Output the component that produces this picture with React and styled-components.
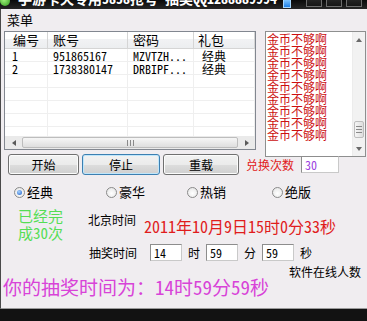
import React from "react";
import styled, { createGlobalStyle } from "styled-components";

const FONT = '"Noto Sans Mono CJK SC", "Noto Sans CJK SC", sans-serif';

const Global = createGlobalStyle`
  html, body { margin: 0; padding: 0; background: #111; }
  body { width: 367px; height: 321px; overflow: hidden; font-family: ${FONT}; }
  * { box-sizing: border-box; }
`;

const Window = styled.div`
  width: 367px;
  height: 321px;
  display: flex;
  flex-direction: column;
  background: #121212;
`;

const TitleBar = styled.div`
  height: 9px;
  flex: none;
  overflow: hidden;
  display: flex;
  align-items: flex-end;
  background: linear-gradient(#0a0a0a, #262626);
`;

const AppIcon = styled.span`
  width: 10px;
  height: 10px;
  flex: none;
  margin-bottom: 3px;
  border-radius: 50%;
  background: radial-gradient(circle at 40% 40%, #9ef07a, #2f9a1c);
`;

const TitleText = styled.span`
  flex: 1;
  margin-left: 8px;
  margin-bottom: 3px;
  color: #fff;
  font-size: 14px;
  font-weight: bold;
  line-height: 16px;
  white-space: nowrap;
`;

const TrayIcon = styled.span`
  width: 8px;
  height: 9px;
  flex: none;
  margin-bottom: 1px;
  margin-right: 15px;
  background: linear-gradient(#7cc4ff, #1e7fe6);
  border: 1px solid #a8d8ff;
`;

const Controls = styled.div`
  display: flex;
  gap: 4px;
  margin-right: 5px;
  margin-bottom: 2px;
`;

const CtrlBtn = styled.span`
  width: 16px;
  height: 12px;
  border: 1px solid #6c6c6c;
  background: linear-gradient(#2c2c2c, #161616);
`;

const Client = styled.div`
  height: 300px;
  flex: none;
  background: #f0edf0;
  border-left: 1px solid #4a4a4a;
  border-bottom: 1px solid #9a9a9a;
  display: flex;
  flex-direction: column;
  color: #000;
`;

const MenuBar = styled.div`
  height: 22px;
  flex: none;
  padding-left: 6px;
  font-size: 13px;
  line-height: 22px;
`;

const TopRow = styled.div`
  display: flex;
  align-items: flex-start;
  padding-left: 3px;
  gap: 9px;
`;

const ListView = styled.div`
  width: 252px;
  height: 119px;
  border: 1px solid #828790;
  background: #fff;
  display: flex;
  flex-direction: column;
`;

const COLS = "43px 80px 66px 1fr";

const HeaderRow = styled.div`
  display: grid;
  grid-template-columns: ${COLS};
  height: 17px;
  flex: none;
  background: linear-gradient(#ffffff 0%, #ffffff 45%, #f1f2f4 46%, #eceef0 100%);
  border-bottom: 1px solid #d5d5d5;
`;

const HeaderCell = styled.div`
  padding-left: ${(p) => p.$pad}px;
  border-right: 1px solid #d5d5d5;
  font-size: 13px;
  line-height: 16px;
  white-space: nowrap;
`;

const Rows = styled.div`
  flex: 1;
  overflow: hidden;
`;

const Row = styled.div`
  display: grid;
  grid-template-columns: ${COLS};
  height: 13px;
`;

const Cell = styled.div`
  height: 13px;
  padding-left: ${(p) => p.$pad}px;
  border-right: 1px solid #efefef;
  border-bottom: 1px solid #efefef;
  font-size: 12px;
  line-height: 13px;
  white-space: nowrap;
`;

const HScroll = styled.div`
  height: 13px;
  flex: none;
  display: flex;
  background: #eaeaea;
`;

const ArrowBox = styled.div`
  width: 17px;
  flex: none;
  display: flex;
  align-items: center;
  justify-content: center;
`;

const Tri = styled.span`
  width: 0;
  height: 0;
  border: 3px solid transparent;
  ${(p) =>
    p.$dir === "left"
      ? "border-right: 4px solid #5a5a5a; border-left-width: 0;"
      : p.$dir === "right"
      ? "border-left: 4px solid #5a5a5a; border-right-width: 0;"
      : p.$dir === "up"
      ? "border-bottom: 4px solid #6a6a6a; border-top-width: 0;"
      : "border-top: 4px solid #6a6a6a; border-bottom-width: 0;"}
`;

const HThumb = styled.div`
  flex: 1;
  margin: 1px 0;
  border: 1px solid #bdbdbd;
  border-radius: 2px;
  background: linear-gradient(#f6f6f6, #dedede);
  display: flex;
  align-items: center;
  justify-content: center;
  gap: 2px;
`;

const GripV = styled.span`
  width: 1px;
  height: 6px;
  background: #8a8a8a;
`;

const TextBox = styled.div`
  width: 101px;
  height: 126px;
  border: 1px solid #8e8f8f;
  background: #fff;
  display: flex;
`;

const Lines = styled.div`
  flex: 1;
  padding: 1px 0 0 1px;
  color: #cc1010;
  font-size: 12px;
  line-height: 12px;
`;

const VScroll = styled.div`
  width: 13px;
  flex: none;
  display: flex;
  flex-direction: column;
  background: #f2f2f2;
  border-left: 1px solid #ececec;
`;

const VArrow = styled.div`
  height: 15px;
  flex: none;
  display: flex;
  align-items: center;
  justify-content: center;
`;

const VTrack = styled.div`
  flex: 1;
  display: flex;
  flex-direction: column;
  justify-content: flex-end;
  padding-bottom: 3px;
`;

const VThumb = styled.div`
  height: 17px;
  margin: 0 1px;
  border: 1px solid #bdbdbd;
  border-radius: 2px;
  background: linear-gradient(90deg, #f6f6f6, #dedede);
  display: flex;
  flex-direction: column;
  align-items: center;
  justify-content: center;
  gap: 2px;
`;

const GripH = styled.span`
  width: 6px;
  height: 1px;
  background: #8a8a8a;
`;

const ButtonRow = styled.div`
  margin-top: -3px;
  height: 21px;
  padding-left: 7px;
  display: flex;
  align-items: center;
`;

const Button = styled.div`
  width: ${(p) => p.$w}px;
  height: 21px;
  margin-right: ${(p) => p.$mr}px;
  border: 1px solid ${(p) => (p.$focus ? "#3c7fb1" : "#707070")};
  border-radius: 3px;
  background: linear-gradient(#f2f2f2 0%, #ebebeb 50%, #dddddd 51%, #cfcfcf 100%);
  box-shadow: inset 0 0 0 1px ${(p) => (p.$focus ? "#bfe6fb" : "#fcfcfc")};
  font-size: 12px;
  line-height: 19px;
  text-align: center;
`;

const RedLabel = styled.span`
  color: #e02020;
  font-size: 12px;
  line-height: 14px;
  margin-right: 7px;
`;

const Field = styled.div`
  width: ${(p) => p.$w}px;
  height: 17px;
  flex: none;
  border: 1px solid #8d8d8d;
  border-right-color: #c9c9c9;
  border-bottom-color: #c9c9c9;
  background: #fff;
  padding-left: 3px;
  font-size: 12px;
  line-height: 15px;
  color: ${(p) => p.$color || "#000"};
`;

const RadioRow = styled.div`
  margin-top: 9px;
  height: 16px;
  padding-left: 13px;
  display: grid;
  grid-template-columns: 92px 81px 85px auto;
  align-items: center;
`;

const RadioItem = styled.label`
  display: flex;
  align-items: center;
  gap: 2px;
  font-size: 13px;
  line-height: 16px;
`;

const RadioDot = styled.span`
  width: 11px;
  height: 11px;
  flex: none;
  border-radius: 50%;
  border: 1px solid #8a8a8a;
  background: radial-gradient(circle at 50% 60%, #ffffff 0%, #e2e2e2 100%);
  display: flex;
  align-items: center;
  justify-content: center;
  &::after {
    content: "";
    width: 5px;
    height: 5px;
    border-radius: 50%;
    background: ${(p) =>
      p.$checked ? "radial-gradient(circle at 40% 35%, #a9d4ff, #1c5cc8)" : "transparent"};
  }
`;

const MidSection = styled.div`
  display: flex;
  padding-left: 17px;
`;

const GreenText = styled.div`
  width: 70px;
  flex: none;
  margin-top: 7px;
  color: #55dd55;
  font-size: 15px;
  line-height: 17px;
  white-space: nowrap;
`;

const RightCol = styled.div`
  display: flex;
  flex-direction: column;
`;

const ClockRow = styled.div`
  display: flex;
  align-items: flex-start;
`;

const SmallLabel = styled.span`
  width: 56px;
  flex: none;
  margin-top: ${(p) => p.$mt || 0}px;
  padding-left: ${(p) => p.$pl || 0}px;
  font-size: 12px;
  line-height: 14px;
  white-space: nowrap;
`;

const DateText = styled.span`
  margin-top: 16px;
  color: #e01c1c;
  font-size: 16px;
  line-height: 20px;
  white-space: nowrap;
`;

const DrawRow = styled.div`
  margin-top: 8px;
  height: 17px;
  display: flex;
  align-items: center;
  gap: 6px;
`;

const Unit = styled.span`
  font-size: 12px;
  line-height: 14px;
`;

const OnlineRow = styled.div`
  margin-top: 6px;
  height: 10px;
  padding-right: 6px;
  display: flex;
  justify-content: flex-end;
  font-size: 12px;
  line-height: 10px;
`;

const PinkText = styled.div`
  padding-left: 2px;
  color: #d843d8;
  font-size: 19px;
  line-height: 20px;
  white-space: nowrap;
`;

const rows = [
  ["1", "951865167", "MZVTZH...", "经典"],
  ["2", "1738380147", "DRBIPF...", "经典"],
  ["", "", "", ""],
  ["", "", "", ""],
  ["", "", "", ""],
  ["", "", "", ""],
  ["", "", "", ""],
];
const headPad = [8, 5, 5, 4];
const cellPad = [7, 5, 5, 8];

export default function App() {
  return (
    <>
      <Global />
      <Window>
        <TitleBar>
          <AppIcon />
          <TitleText>手游卡天专用5858抢号 抽奖QQ1288889994</TitleText>
          <TrayIcon />
          <Controls>
            <CtrlBtn />
            <CtrlBtn />
            <CtrlBtn />
          </Controls>
        </TitleBar>
        <Client>
          <MenuBar>菜单</MenuBar>
          <TopRow>
            <ListView>
              <HeaderRow>
                {["编号", "账号", "密码", "礼包"].map((h, i) => (
                  <HeaderCell key={h} $pad={headPad[i]}>
                    {h}
                  </HeaderCell>
                ))}
              </HeaderRow>
              <Rows>
                {rows.map((r, ri) => (
                  <Row key={ri}>
                    {r.map((c, ci) => (
                      <Cell key={ci} $pad={cellPad[ci]}>
                        {c}
                      </Cell>
                    ))}
                  </Row>
                ))}
              </Rows>
              <HScroll>
                <ArrowBox>
                  <Tri $dir="left" />
                </ArrowBox>
                <HThumb>
                  <GripV />
                  <GripV />
                  <GripV />
                </HThumb>
                <ArrowBox>
                  <Tri $dir="right" />
                </ArrowBox>
              </HScroll>
            </ListView>
            <TextBox>
              <Lines>
                {Array.from({ length: 9 }).map((_, i) => (
                  <div key={i}>金币不够啊</div>
                ))}
              </Lines>
              <VScroll>
                <VArrow>
                  <Tri $dir="up" />
                </VArrow>
                <VTrack>
                  <VThumb>
                    <GripH />
                    <GripH />
                    <GripH />
                  </VThumb>
                </VTrack>
                <VArrow>
                  <Tri $dir="down" />
                </VArrow>
              </VScroll>
            </TextBox>
          </TopRow>
          <ButtonRow>
            <Button $w={71} $mr={3}>开始</Button>
            <Button $w={78} $mr={3} $focus>停止</Button>
            <Button $w={76} $mr={7}>重载</Button>
            <RedLabel>兑换次数</RedLabel>
            <Field $w={38} $color="#9b3fe0">30</Field>
          </ButtonRow>
          <RadioRow>
            <RadioItem>
              <RadioDot $checked />
              经典
            </RadioItem>
            <RadioItem>
              <RadioDot />
              豪华
            </RadioItem>
            <RadioItem>
              <RadioDot />
              热销
            </RadioItem>
            <RadioItem>
              <RadioDot />
              绝版
            </RadioItem>
          </RadioRow>
          <MidSection>
            <GreenText>
              已经完
              <br />
              成30次
            </GreenText>
            <RightCol>
              <ClockRow>
                <SmallLabel $mt={13}>北京时间</SmallLabel>
                <DateText>2011年10月9日15时0分33秒</DateText>
              </ClockRow>
              <DrawRow>
                <SmallLabel $pl={1}>抽奖时间</SmallLabel>
                <Field $w={32}>14</Field>
                <Unit>时</Unit>
                <Field $w={32}>59</Field>
                <Unit>分</Unit>
                <Field $w={32}>59</Field>
                <Unit>秒</Unit>
              </DrawRow>
            </RightCol>
          </MidSection>
          <OnlineRow>软件在线人数</OnlineRow>
          <PinkText>你的抽奖时间为：14时59分59秒</PinkText>
        </Client>
      </Window>
    </>
  );
}
